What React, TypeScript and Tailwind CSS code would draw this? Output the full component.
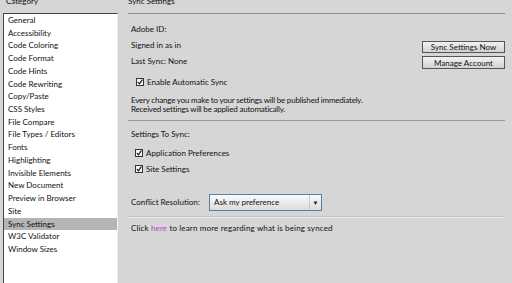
import React from 'react';

const categories = [
  'General',
  'Accessibility',
  'Code Coloring',
  'Code Format',
  'Code Hints',
  'Code Rewriting',
  'Copy/Paste',
  'CSS Styles',
  'File Compare',
  'File Types / Editors',
  'Fonts',
  'Highlighting',
  'Invisible Elements',
  'New Document',
  'Preview in Browser',
  'Site',
  'Sync Settings',
  'W3C Validator',
  'Window Sizes',
];

const Check: React.FC = () => (
  <span className="w-[8px] h-[8px] border border-[#333] bg-[#f4f4f4] flex items-center justify-center shrink-0">
    <svg width="6" height="6" viewBox="0 0 6 6">
      <path d="M0.8 3 L2.4 4.8 L5.4 0.6" stroke="#111" strokeWidth="1.1" fill="none" />
    </svg>
  </span>
);

const Button: React.FC<{ label: string; h: string }> = ({ label, h }) => (
  <button
    className={`w-[83px] ${h} border border-[#555] bg-gradient-to-b from-[#f2f2f2] to-[#d2d2d2] text-[8px] leading-none text-[#111] flex items-center justify-center`}
  >
    {label}
  </button>
);

export default function App() {
  return (
    <div
      className="w-[512px] h-[283px] overflow-hidden bg-[#d6d6d6] flex text-[#111] text-[8px]"
      style={{ fontFamily: 'Lato, "Liberation Sans", sans-serif' }}
    >
      {/* Category list */}
      <div className="w-[120px] shrink-0 flex flex-col pl-[3px] pr-[2px]">
        <div className="h-[13px] shrink-0 pl-[3px] leading-[2px]">Category</div>
        <div className="flex-1 bg-white border-l border-t border-[#444] border-r-[#eee] border-r">
          {categories.map((c) => (
            <div
              key={c}
              className={`h-[12.72px] leading-[12.72px] pl-[4px] whitespace-nowrap ${
                c === 'Sync Settings' ? 'bg-[#b5b5b5]' : ''
              }`}
            >
              {c}
            </div>
          ))}
        </div>
      </div>

      {/* Sync settings panel */}
      <div className="flex-1 pl-[8px] pr-[7px] flex flex-col">
        <div className="h-[14px] shrink-0 border-b border-[#8e8e8e] leading-[2px]">Sync Settings</div>

        <div className="flex justify-between pl-[3px]">
          <div className="pt-[7px] flex flex-col">
            <div className="leading-[16px]">Adobe ID:</div>
            <div className="leading-[16px]">Signed in as in</div>
            <div className="leading-[16px]">Last Sync: None</div>
          </div>
          <div className="pt-[27px] flex flex-col gap-[3px]">
            <Button label="Sync Settings Now" h="h-[12px]" />
            <Button label="Manage Account" h="h-[13px]" />
          </div>
        </div>

        <div className="mt-[5px] h-[16px] pl-[8px] flex items-center gap-[3px]">
          <Check />
          <span>Enable Automatic Sync</span>
        </div>

        <div className="mt-[6px] pl-[3px] leading-[8.5px] tracking-[-0.2px]">
          <div>Every change you make to your settings will be published immediately.</div>
          <div>Received settings will be applied automatically.</div>
        </div>

        <div className="mt-[7px] border-t border-[#9a9a9a]" />

        <div className="mt-[5px] pl-[3px] leading-[16px]">Settings To Sync:</div>
        <div className="mt-[3px] h-[16px] pl-[7px] flex items-center gap-[3px]">
          <Check />
          <span>Application Preferences</span>
        </div>
        <div className="h-[16px] pl-[7px] flex items-center gap-[3px]">
          <Check />
          <span>Site Settings</span>
        </div>

        <div className="mt-[16px] h-[18px] pl-[3px] flex items-center">
          <span className="w-[78px]">Conflict Resolution:</span>
          <div className="w-[113px] h-[17px] border border-[#5a7fa8] bg-gradient-to-b from-[#fbfbfb] to-[#dcdcdc] flex items-center">
            <span className="flex-1 pl-[4px]">Ask my preference</span>
            <span className="w-[12px] h-full border-l border-[#c8c8c8] flex items-center justify-center text-[6px]">▼</span>
          </div>
        </div>

        <div className="mt-[5px] border-t border-[#c4c4c4] border-b border-b-[#ececec]" />

        <div className="h-[16px] leading-[16px] pl-[3px] mt-[2px] tracking-[0.15px]">
          Click <span className="text-[#c040d0]">here</span> to learn more regarding what is being synced
        </div>
      </div>
    </div>
  );
}
